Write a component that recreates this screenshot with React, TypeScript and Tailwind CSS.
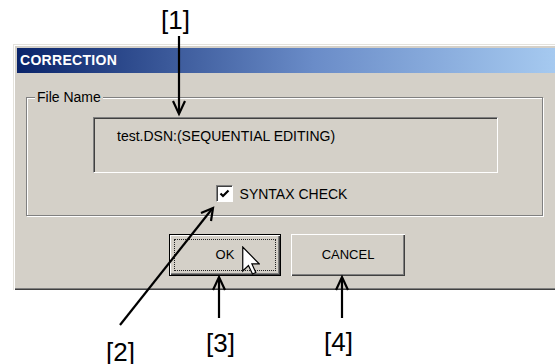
import React from "react";

const ui = { fontFamily: '"Liberation Sans", Arial, sans-serif' };

function Arrows() {
  return (
    <svg className="pointer-events-none absolute left-0 top-0" width={555} height={364} viewBox="0 0 555 364">
      <g stroke="#000" strokeWidth={2.2} fill="none" strokeLinecap="butt" strokeLinejoin="miter">
        {/* [1] */}
        <line x1={179} y1={36} x2={179} y2={113} />
        <polyline points="173,101 179,114 185,101" />
        {/* [2] */}
        <line x1={120} y1={325} x2={212} y2={209} />
        <polyline points="201,213 213,208 211,221" />
        {/* [3] */}
        <line x1={219} y1={318} x2={219} y2={279} />
        <polyline points="213,290 219,277 225,290" />
        {/* [4] */}
        <line x1={342} y1={318} x2={342} y2={279} />
        <polyline points="336,290 342,277 348,290" />
      </g>
    </svg>
  );
}

function Cursor() {
  return (
    <svg className="pointer-events-none absolute left-[242px] top-[246px]" width={18} height={29} viewBox="0 0 12 19">
      <path d="M0.5 0.5 L0.5 16.5 L4.3 12.8 L7 18.5 L9.2 17.5 L6.6 11.8 L11.5 11.8 Z" fill="#fff" stroke="#000" strokeWidth={0.8} strokeLinejoin="miter" />
    </svg>
  );
}

function Label({ text, className }: { text: string; className: string }) {
  return (
    <span className={"absolute text-[26px] leading-none text-black " + className} style={ui}>
      {text}
    </span>
  );
}

export default function App() {
  return (
    <div className="relative h-[364px] w-[555px] overflow-hidden bg-white pl-[13px] pt-[44px]" style={ui}>
      <div className="h-[246px] w-[548px] bg-[#d4d0c8] p-[4px] shadow-[inset_1px_1px_0_#e4e2dc,inset_2px_2px_0_#fff,inset_-1px_-1px_0_#404040,inset_-2px_-2px_0_#808080]">
        <div className="flex h-[25px] items-center bg-[linear-gradient(90deg,#0a246a,#6a8cc8_55%,#a6caf0)] pl-[3px]">
          <span className="text-[14px] font-bold tracking-[0.3px] text-white">CORRECTION</span>
        </div>

        <div className="relative ml-[9px] mt-[24px] h-[119px] w-[517px] border border-[#808080] shadow-[1px_1px_0_#fff,inset_1px_1px_0_#fff]">
          <span className="absolute -top-[9px] left-[8px] bg-[#d4d0c8] px-[2px] text-[14px] leading-[16px] text-black">File Name</span>
          <div className="ml-[66px] mt-[19px] h-[56px] w-[405px] border border-b-white border-l-[#808080] border-r-white border-t-[#808080] pl-[23px] pt-[6px] shadow-[inset_1px_1px_0_#404040]">
            <span className="text-[14px] leading-[16px] text-black">test.DSN:(SEQUENTIAL EDITING)</span>
          </div>
          <div className="mt-[12px] flex items-center justify-center gap-[7px] pr-[6px]">
            <div className="flex h-[17px] w-[17px] items-center justify-center border border-b-white border-l-[#808080] border-r-white border-t-[#808080] bg-white shadow-[inset_1px_1px_0_#404040]">
              <svg width={11} height={10} viewBox="0 0 11 10">
                <path d="M1.5 4.5 L4 7 L9.5 1.5" stroke="#000" strokeWidth={2.2} fill="none" />
              </svg>
            </div>
            <span className="text-[14px] leading-[16px] text-black">SYNTAX CHECK</span>
          </div>
        </div>

        <div className="mt-[18px] flex gap-[10px] pl-[152px]">
          <button className="h-[42px] w-[112px] border border-black bg-[#d4d0c8] p-[1px] shadow-[inset_1px_1px_0_#fff,inset_-1px_-1px_0_#404040,inset_-2px_-2px_0_#808080]">
            <div className="m-[3px] flex h-[32px] items-center justify-center border border-dotted border-[#222] text-[13px] text-black">
              OK
            </div>
          </button>
          <button className="flex h-[42px] w-[114px] items-center justify-center bg-[#d4d0c8] text-[13px] text-black shadow-[inset_1px_1px_0_#fff,inset_-1px_-1px_0_#404040,inset_-2px_-2px_0_#808080]">
            CANCEL
          </button>
        </div>
      </div>

      <Cursor />
      <Arrows />
      <Label text="[1]" className="left-[161px] top-[7px]" />
      <Label text="[2]" className="left-[106px] top-[339px]" />
      <Label text="[3]" className="left-[206px] top-[330px]" />
      <Label text="[4]" className="left-[324px] top-[329px]" />
    </div>
  );
}
